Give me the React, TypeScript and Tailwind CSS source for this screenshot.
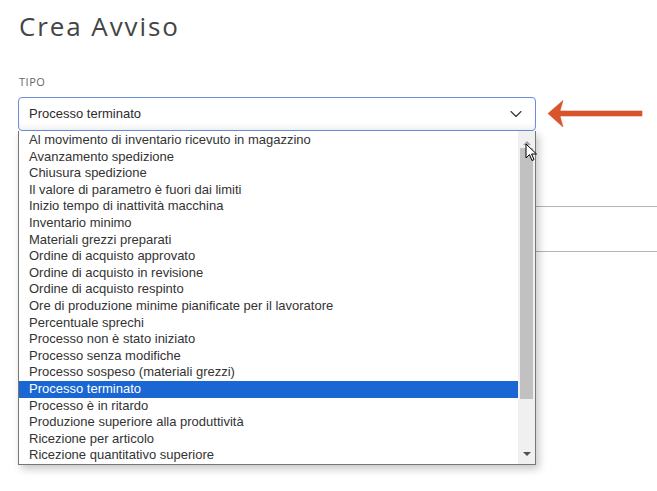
import { ChevronDown } from "lucide-react";

const options = [
  "Al movimento di inventario ricevuto in magazzino",
  "Avanzamento spedizione",
  "Chiusura spedizione",
  "Il valore di parametro è fuori dai limiti",
  "Inizio tempo di inattività macchina",
  "Inventario minimo",
  "Materiali grezzi preparati",
  "Ordine di acquisto approvato",
  "Ordine di acquisto in revisione",
  "Ordine di acquisto respinto",
  "Ore di produzione minime pianificate per il lavoratore",
  "Percentuale sprechi",
  "Processo non è stato iniziato",
  "Processo senza modifiche",
  "Processo sospeso (materiali grezzi)",
  "Processo terminato",
  "Processo è in ritardo",
  "Produzione superiore alla produttività",
  "Ricezione per articolo",
  "Ricezione quantitativo superiore",
];

const selected = "Processo terminato";

export default function App() {
  return (
    <div className="relative min-h-[491px] w-[657px] overflow-hidden bg-white font-['Open_Sans',sans-serif]">
      {/* Header */}
      <h1 className="ml-[19px] pt-[11px] text-[26px] leading-[30px] tracking-[1.9px] text-[#444]">
        Crea Avviso
      </h1>

      {/* Tipo field */}
      <div className="mt-[34px] pl-[18px] w-[536px]">
        <label className="ml-px block text-[11px] leading-[14px] tracking-[0.5px] text-[#666]">
          TIPO
        </label>
        <div className="relative mt-2">
          <div className="flex h-[34px] items-center justify-between rounded-[4px] border border-[#6b8edc] bg-white pl-[10px] pr-[9px] shadow-[inset_0_-4px_5px_rgba(0,0,0,0.04)] font-['Liberation_Sans',Arial,sans-serif] text-[13px] text-[#2b2b2b]">
            <span>{selected}</span>
            <ChevronDown size={20} strokeWidth={1.3} className="text-[#333]" />
          </div>

          {/* Open list */}
          <div className="absolute left-0 top-[34px] z-10 flex h-[334px] w-[518px] border-x border-b border-[#777] bg-white shadow-[3px_4px_8px_rgba(0,0,0,0.22)] font-['Liberation_Sans',Arial,sans-serif] text-[13px] text-[#333]">
            <ul className="flex-1 pt-px">
              {options.map((o) => (
                <li
                  key={o}
                  className={
                    o === selected
                      ? "h-[16.6px] bg-[#1a67d3] pl-[10px] leading-[16.6px] text-white"
                      : "h-[16.6px] pl-[10px] leading-[16.6px]"
                  }
                >
                  {o}
                </li>
              ))}
            </ul>
            {/* Scrollbar */}
            <div className="flex w-[17px] flex-col bg-[#f0f0f0]">
              <div className="flex h-[17px] items-start justify-center pt-[9px]">
                <svg width="8" height="5" viewBox="0 0 8 5">
                  <path d="M0 5 L4 1 L8 5 Z" fill="#a3a3a3" />
                </svg>
              </div>
              <div className="ml-[2px] h-[251px] w-[13px] bg-[#c1c1c1]" />
              <div className="flex-1" />
              <div className="flex h-[17px] items-start justify-center pt-[5px]">
                <svg width="8" height="5" viewBox="0 0 8 5">
                  <path d="M0 0 L8 0 L4 4 Z" fill="#505050" />
                </svg>
              </div>
            </div>
          </div>

          {/* Mouse pointer */}
          <svg
            className="absolute left-[507px] top-[46px] z-20"
            width="13"
            height="19"
            viewBox="0 0 13 19"
          >
            <path
              d="M1 1 L1 15 L4.5 11.5 L7 17.5 L9 16.6 L6.6 11 L11.5 11 Z"
              fill="#fff"
              stroke="#000"
              strokeWidth="1"
              strokeLinejoin="round"
            />
          </svg>
        </div>
      </div>

      {/* Content behind the list */}
      <div className="mt-[75px] ml-[19px] h-[46px] border-y border-[#b3b3bb]" />

      {/* Annotation arrow */}
      <svg
        className="absolute left-[546px] top-[98px]"
        width="100"
        height="32"
        viewBox="0 0 100 32"
      >
        <path
          d="M2 15.5 L17 2.5 L14 13 L96 13 L96 18 L14 18 L17 29 Z"
          fill="#d9532b"
          stroke="#d9532b"
          strokeWidth="0.6"
          strokeLinejoin="round"
        />
      </svg>
    </div>
  );
}
